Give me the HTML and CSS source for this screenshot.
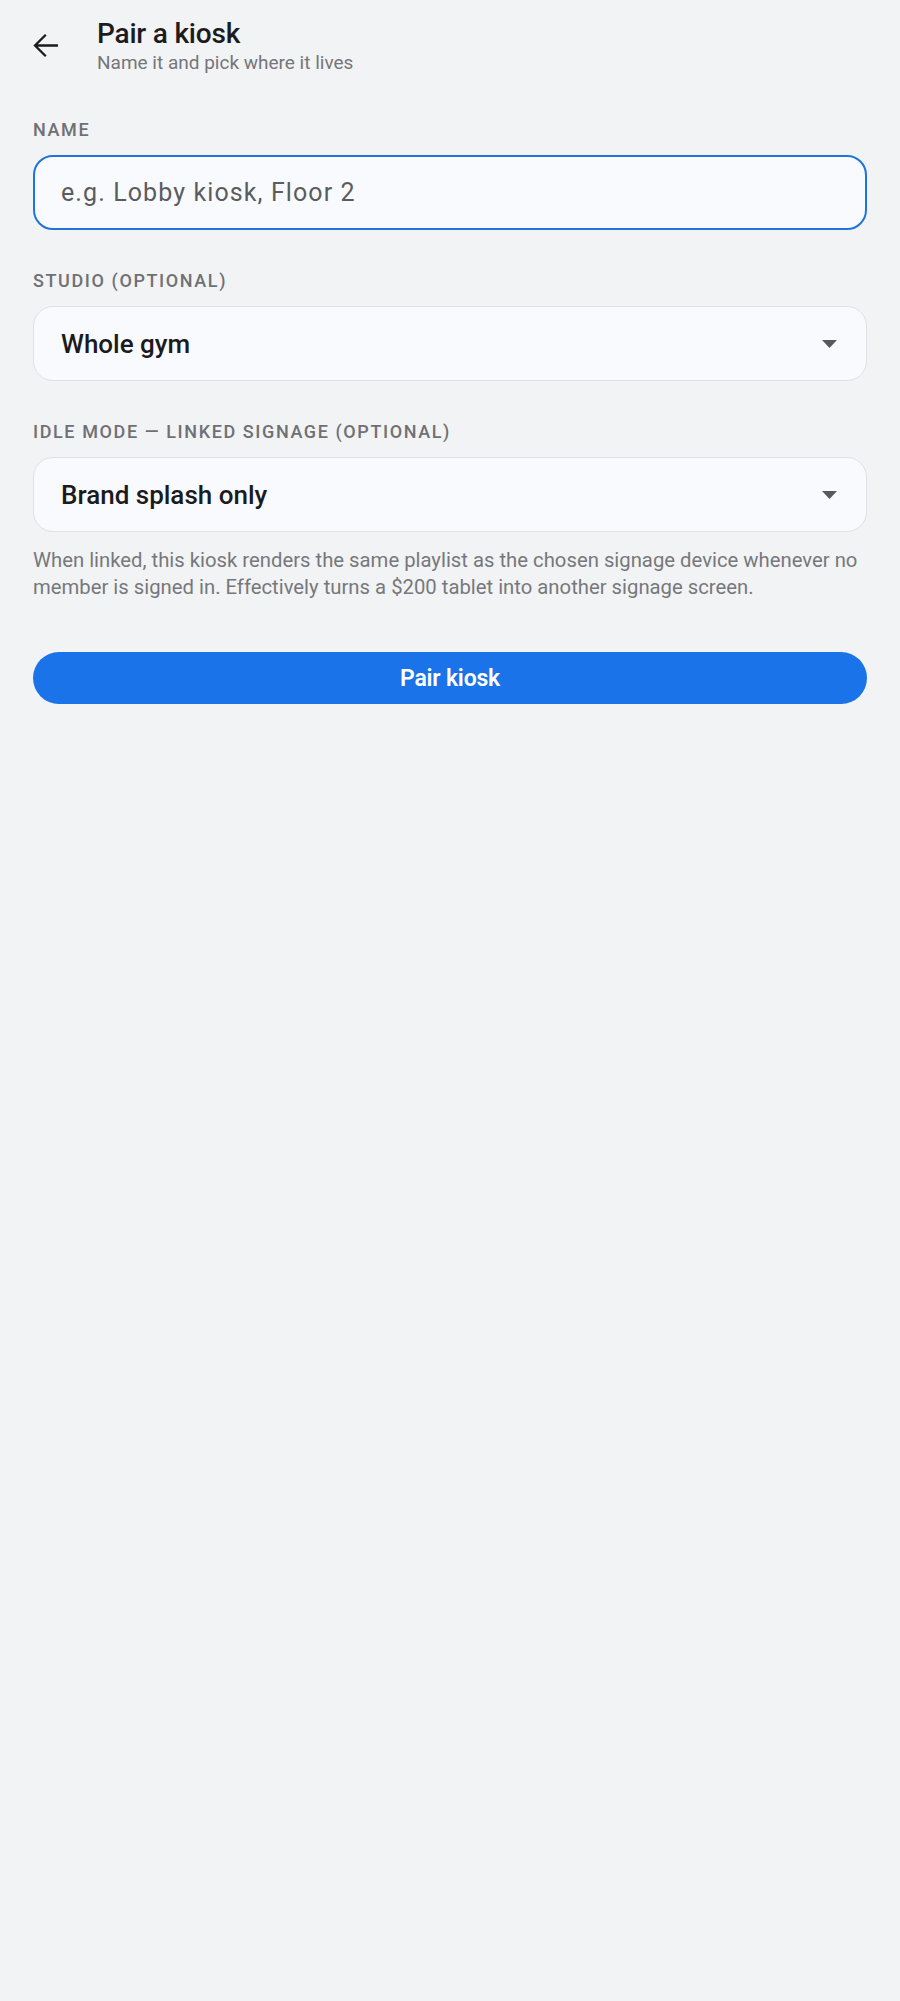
FILE: index.html
```html
<!DOCTYPE html>
<html>
  <head>
    <title>Pair a kiosk</title>
    <meta charset='utf-8'>
    <link rel="stylesheet" href="styles.css">
  </head>

  <body>
    <div class="page">
      <!-- header: back arrow + title block -->
      <div class="top-bar">
        <a class="back" href="#">
          <svg width="26" height="26" viewBox="0 0 26 26">
            <path d="M25 12.5H2.5M12.8 1.8L2 12.5l10.8 10.7" fill="none" stroke="#1c1c1f" stroke-width="2.3"/>
          </svg>
        </a>
        <div class="heading">
          <div class="title">Pair a kiosk</div>
          <div class="subtitle">Name it and pick where it lives</div>
        </div>
      </div>

      <form class="form">
        <label class="label first" for="kiosk-name">Name</label>
        <input class="field" id="kiosk-name" type="text" placeholder="e.g. Lobby kiosk, Floor 2"/>

        <div class="label">Studio (optional)</div>
        <div class="select">
          <span>Whole gym</span>
          <svg class="caret" width="15" height="8" viewBox="0 0 15 8"><path d="M0 0h15L7.5 8z" fill="#59595c"/></svg>
        </div>

        <div class="label">Idle mode — linked signage (optional)</div>
        <div class="select">
          <span>Brand splash only</span>
          <svg class="caret" width="15" height="8" viewBox="0 0 15 8"><path d="M0 0h15L7.5 8z" fill="#59595c"/></svg>
        </div>
        <p class="hint">When linked, this kiosk renders the same playlist as the chosen signage device whenever no member is signed in. Effectively turns a $200 tablet into another signage screen.</p>

        <button class="primary" type="button">Pair kiosk</button>
      </form>
    </div>
  </body>
</html>
```
FILE: styles.css
```css
body {
  margin: 0;
  background: #f2f3f5;
  font-family: Roboto, "Noto Sans", sans-serif;
  color: #1c1c1f;
}

.page {
  padding: 0 33px;
}

.top-bar {
  display: flex;
  align-items: flex-start;
  padding-top: 17px;
}
.back {
  display: block;
  width: 26px;
  height: 26px;
  margin-top: 16px;
}
.back svg {
  display: block;
}
.heading {
  margin-left: 38px;
}
.title {
  font-size: 28px;
  line-height: 34px;
  font-weight: 500;
  letter-spacing: -0.2px;
}
.subtitle {
  font-size: 19px;
  line-height: 24px;
  color: #75767a;
}

.form {
  display: flex;
  flex-direction: column;
  margin: 0;
}
.label {
  display: block;
  margin: 41px 0 15px;
  font-size: 18px;
  line-height: 20px;
  font-weight: 500;
  letter-spacing: 1.6px;
  text-transform: uppercase;
  color: #6f7074;
}
.label.first {
  margin-top: 45px;
}

.field {
  box-sizing: border-box;
  height: 75px;
  width: 100%;
  padding: 0 26px;
  border: 2px solid #1f74dc;
  border-radius: 20px;
  background: #f8fafd;
  font-family: Roboto, sans-serif;
  font-size: 25px;
  letter-spacing: 1.1px;
  color: #1c1c1f;
  outline: none;
}
.field::placeholder {
  color: #5b5c60;
}

.select {
  box-sizing: border-box;
  height: 75px;
  display: flex;
  align-items: center;
  justify-content: space-between;
  padding: 0 29px 0 27px;
  border: 1.5px solid #dfe1e5;
  border-radius: 20px;
  background: #f9fafd;
  font-size: 26px;
  font-weight: 500;
  color: #1b1b1e;
}
.caret {
  display: block;
}

.hint {
  margin: 15px 0 0;
  font-size: 20.3px;
  line-height: 27px;
  color: #77787c;
}

.primary {
  margin-top: 51px;
  height: 52px;
  border: none;
  border-radius: 26px;
  background: #1a73e8;
  color: #fff;
  font-family: Roboto, sans-serif;
  font-size: 23px;
  font-weight: 600;
  letter-spacing: -0.2px;
}
```
